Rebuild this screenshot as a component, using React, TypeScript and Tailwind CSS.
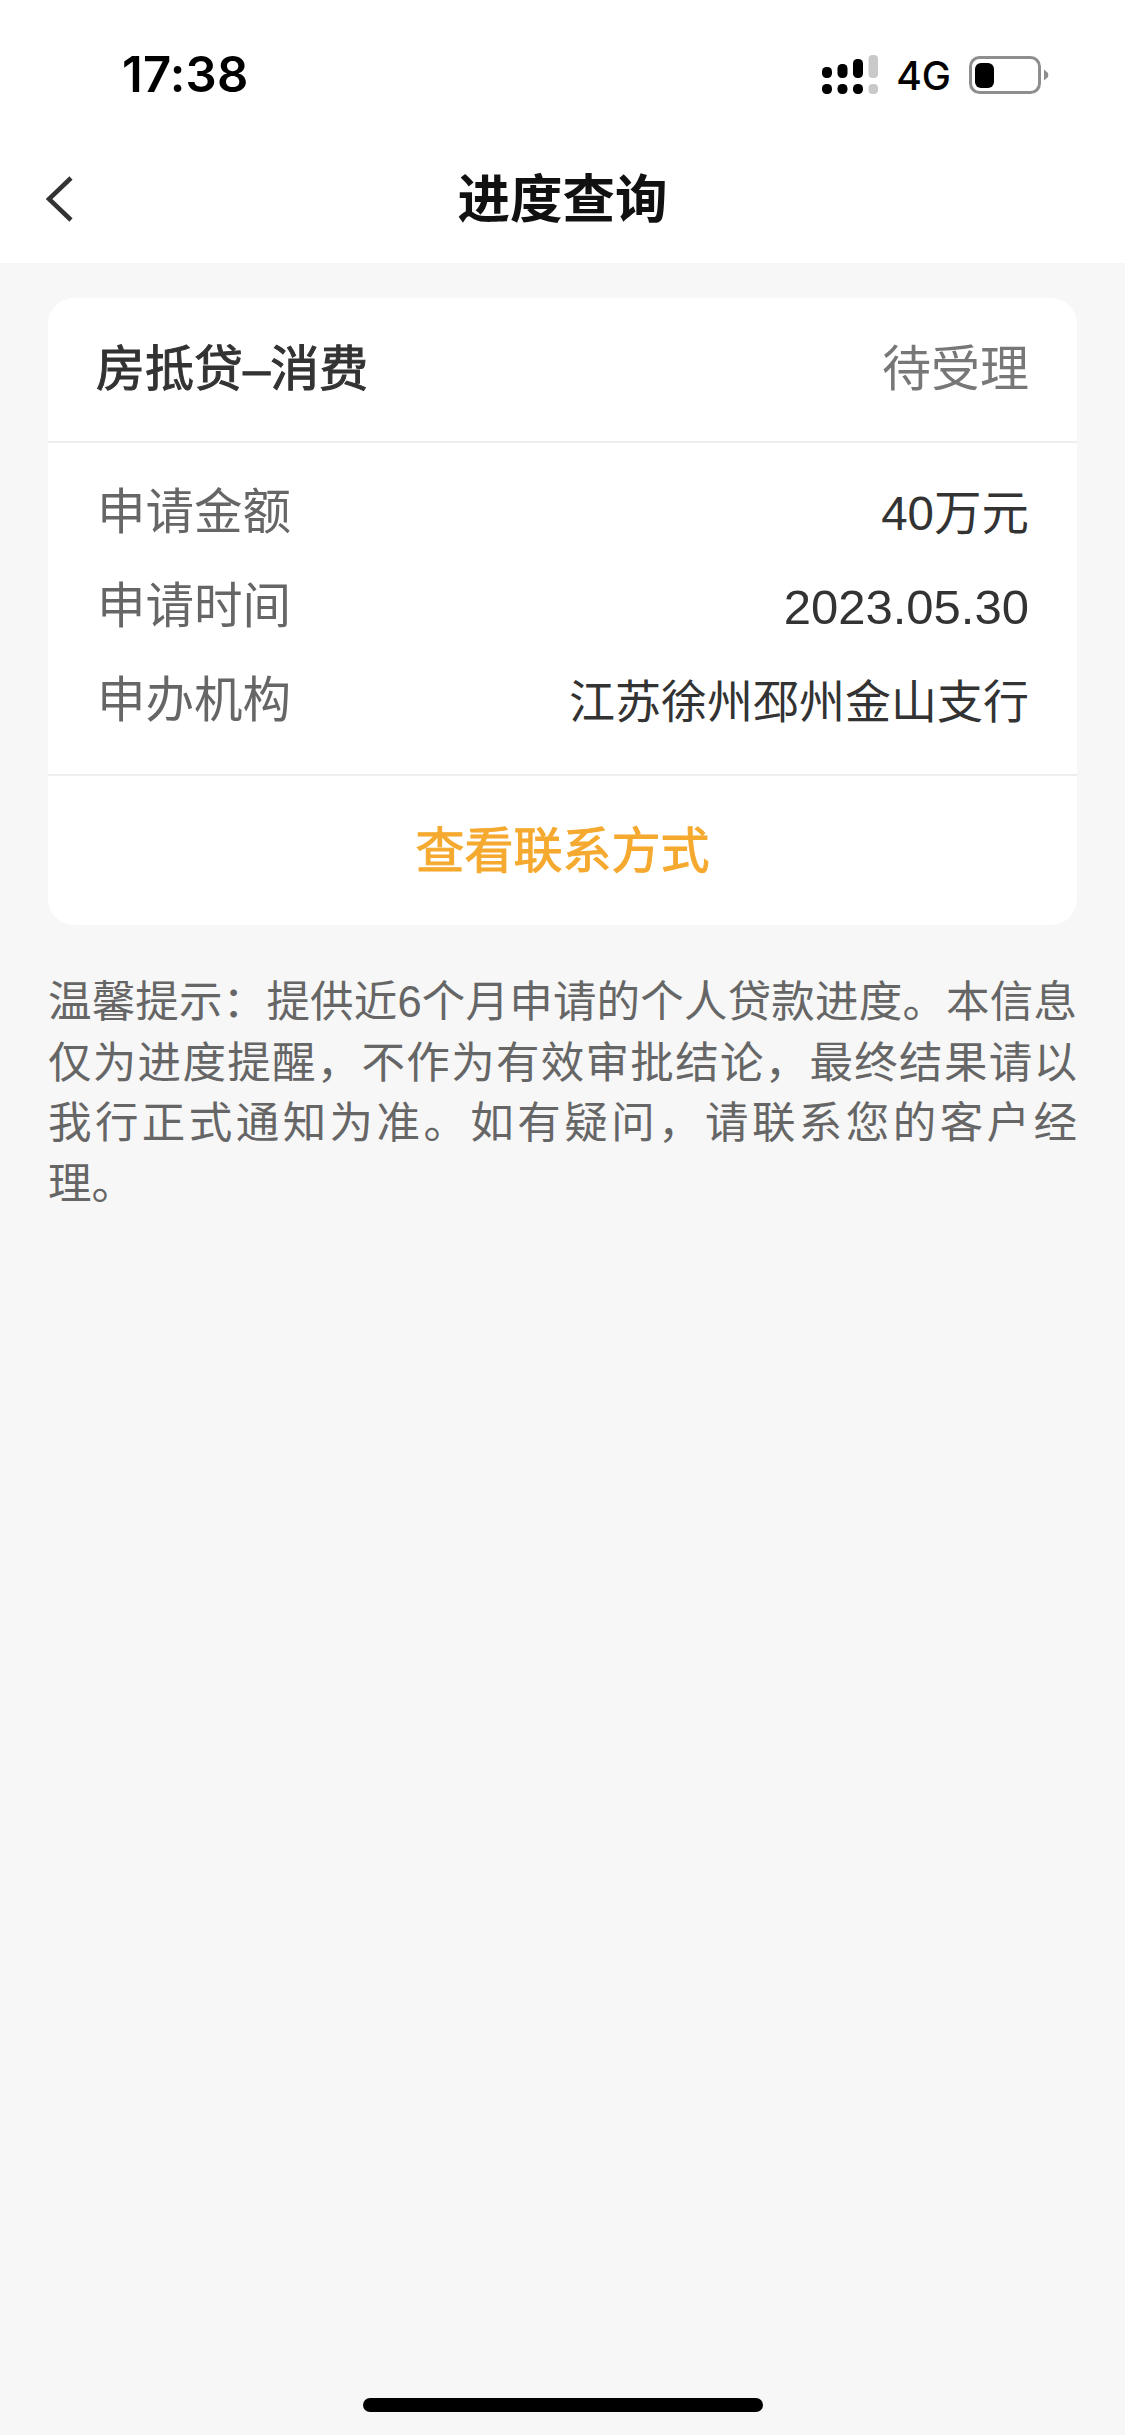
const details = [
  { label: '申请金额', value: '40万元', size: 'text-[47.5px]' },
  { label: '申请时间', value: '2023.05.30', size: 'text-[49px]' },
  { label: '申办机构', value: '江苏徐州邳州金山支行', size: 'text-[46px]' },
];

const fontStack = "font-['Liberation_Sans','Noto_Sans_CJK_SC',sans-serif]";

function SignalIcon() {
  return (
    <svg width="56" height="40" viewBox="0 0 56 40" className="block">
      <rect x="0" y="12" width="10" height="11" rx="4.5" fill="#000" />
      <rect x="15.5" y="9" width="10" height="14" rx="4.5" fill="#000" />
      <rect x="31" y="4" width="10" height="19" rx="4.5" fill="#000" />
      <rect x="46.5" y="0" width="9.5" height="23" rx="4" fill="#c9c9c9" />
      <rect x="0" y="29" width="10" height="10" rx="4.5" fill="#000" />
      <rect x="15.5" y="29" width="10" height="10" rx="4.5" fill="#000" />
      <rect x="31" y="29" width="10" height="10" rx="4.5" fill="#000" />
      <rect x="46.5" y="29" width="9.5" height="10" rx="4" fill="#c9c9c9" />
    </svg>
  );
}

function BatteryIcon() {
  return (
    <svg width="80" height="38" viewBox="0 0 80 38" className="block">
      <rect x="1.5" y="1.5" width="69" height="35" rx="9" fill="#fff" stroke="#8e8e8e" strokeWidth="3" />
      <rect x="6" y="7" width="19" height="25" rx="6" fill="#000" />
      <path d="M75 13.5 L79 17 Q79.5 19 79 21 L75 24.5 Z" fill="#8e8e8e" />
    </svg>
  );
}

export default function App() {
  return (
    <div className={`flex min-h-[2435px] w-[1125px] flex-col bg-[#f7f7f7] ${fontStack}`}>
      {/* status bar */}
      <div className="flex h-[135px] items-center justify-between bg-white pt-[15px] pl-[122px] pr-[76px]">
        <span className="font-['Inter',sans-serif] text-[49px] font-semibold tracking-[0.2px] text-black">17:38</span>
        <div className="flex items-center">
          <SignalIcon />
          <span className="ml-[18px] font-['Inter',sans-serif] text-[39px] font-medium leading-none text-black">4G</span>
          <div className="ml-[18px]">
            <BatteryIcon />
          </div>
        </div>
      </div>

      {/* nav */}
      <div className="relative flex h-[128px] items-center justify-center bg-white">
        <svg width="30" height="48" viewBox="0 0 30 48" className="absolute top-[40px] left-[45px]" fill="none">
          <path d="M26 3 L4 24 L26 45" stroke="#333" strokeWidth="4.5" />
        </svg>
        <span className="pt-[2px] text-[52.5px] font-bold text-[#111]">进度查询</span>
      </div>

      {/* card */}
      <div className="mx-[48px] mt-[35px] flex flex-col rounded-[26px] bg-white">
        <div className="flex h-[145px] items-center justify-between border-b-2 border-[#eeeeee] px-[48px]">
          <span className="text-[49px] text-[#333333] [-webkit-text-stroke:1px_#333333]">房抵贷–消费</span>
          <span className="text-[49px] text-[#777777]">待受理</span>
        </div>
        <div className="flex h-[333px] flex-col justify-center gap-[34px] border-b-2 border-[#eeeeee] px-[48px] pb-[4px]">
          {details.map((row) => (
            <div key={row.label} className="flex h-[60px] items-center justify-between">
              <span className="pl-[1px] text-[48.5px] text-[#666666]">{row.label}</span>
              <span className={`pt-[3px] ${row.size} text-[#333333]`}>{row.value}</span>
            </div>
          ))}
        </div>
        <div className="flex h-[149px] items-center justify-center pt-[2px] text-[49px] text-[#f5a92f] [-webkit-text-stroke:1px_#f5a92f]">
          查看联系方式
        </div>
      </div>

      {/* note */}
      <p className="mx-[48px] mt-[47px] text-justify text-[43.5px] leading-[60.7px] text-[#666666]">
        温馨提示：提供近6个月申请的个人贷款进度。本信息仅为进度提醒，不作为有效审批结论，最终结果请以我行正式通知为准。如有疑问，请联系您的客户经理。
      </p>

      {/* home indicator */}
      <div className="mt-auto flex justify-center pb-[23px]">
        <div className="h-[14px] w-[400px] rounded-full bg-black" />
      </div>
    </div>
  );
}
